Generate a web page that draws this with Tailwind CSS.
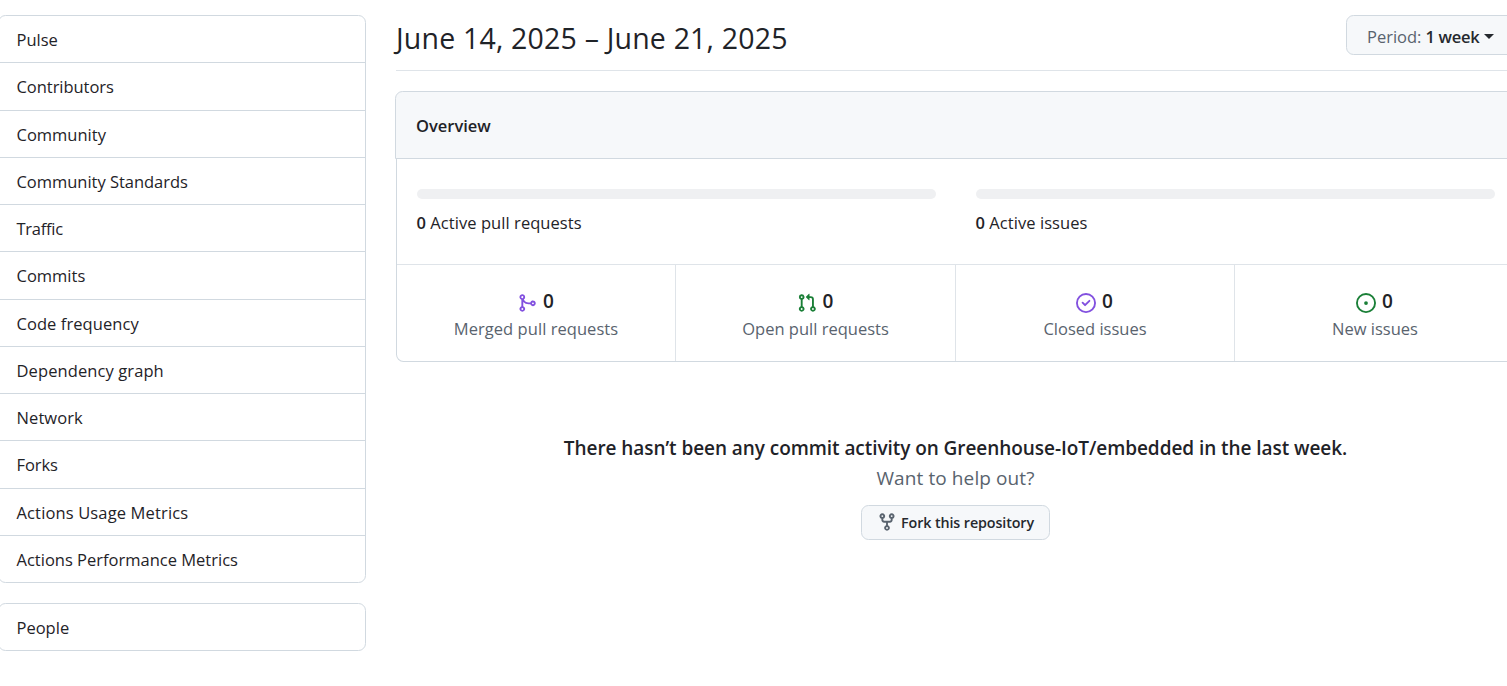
<!DOCTYPE html>
<html lang="en">
<head>
<meta charset="utf-8">
<title>Pulse</title>
<script src="https://cdn.jsdelivr.net/npm/@tailwindcss/browser@4"></script>
</head>
<body class="w-[1507px] h-[686px] overflow-hidden bg-white text-[#1f2328] font-['Open_Sans','Noto_Sans',sans-serif] text-[16.5px] leading-[26px]">
<div class="flex w-[1516px] pt-[15px]">
  <aside class="w-[368px] -ml-[2px] shrink-0">
    <nav class="rounded-[7.5px] border border-[#d1d9e0] [&>*+*]:border-t [&>*+*]:border-[#d1d9e0]">
      <a class="flex h-[46.25px] items-center pt-[2px] pl-[17.5px]">Pulse</a>
      <a class="flex h-[47.25px] items-center pt-[2px] pl-[17.5px] tracking-[-0.04px]">Contributors</a>
      <a class="flex h-[47.25px] items-center pt-[2px] pl-[17.5px]">Community</a>
      <a class="flex h-[47.25px] items-center pt-[2px] pl-[17.5px] tracking-[-0.03px]">Community Standards</a>
      <a class="flex h-[47.25px] items-center pt-[2px] pl-[17.5px] tracking-[-0.25px]">Traffic</a>
      <a class="flex h-[47.25px] items-center pt-[2px] pl-[17.5px]">Commits</a>
      <a class="flex h-[47.25px] items-center pt-[2px] pl-[17.5px] tracking-[0.07px]">Code frequency</a>
      <a class="flex h-[47.25px] items-center pt-[2px] pl-[17.5px] tracking-[0.1px]">Dependency graph</a>
      <a class="flex h-[47.25px] items-center pt-[2px] pl-[17.5px] tracking-[0.1px]">Network</a>
      <a class="flex h-[47.25px] items-center pt-[2px] pl-[17.5px] tracking-[-0.1px]">Forks</a>
      <a class="flex h-[47.25px] items-center pt-[2px] pl-[17.5px] tracking-[0.14px]">Actions Usage Metrics</a>
      <a class="flex h-[47.25px] items-center pt-[2px] pl-[17.5px]">Actions Performance Metrics</a>
    </nav>
    <nav class="mt-5 rounded-[7.5px] border border-[#d1d9e0]">
      <a class="flex h-[46px] items-center pt-[2px] pl-[17.5px]">People</a>
    </nav>
  </aside>
  <main class="ml-[29px] w-[1121px] shrink-0">
    <header class="ml-px flex h-14 items-start justify-between border-b border-[#d1d9e0]/70">
      <h2 class="text-[28.5px] leading-[47px] tracking-[0.19px] whitespace-nowrap">June 14, 2025 – June 21, 2025</h2>
      <button class="flex h-10 w-[170px] items-center rounded-[7.5px] border border-[#d1d9e0] bg-[#f6f8fa] pt-[3px] pl-5 whitespace-nowrap">
        <span class="font-medium text-[#59636e]">Period:</span>
        <span class="ml-[4px] font-semibold text-[#25292e] tracking-[-0.3px]">1 week</span>
        <span class="ml-[5px] border-x-5 border-t-5 border-x-transparent border-t-[#25292e]"></span>
      </button>
    </header>
    <section class="mt-5">
      <div class="flex h-[68px] items-center rounded-t-[7.5px] border border-[#d1d9e0] bg-[#f6f8fa] pt-[2px] pl-5">
        <h3 class="font-semibold">Overview</h3>
      </div>
      <div class="ml-px rounded-b-[7.5px] border border-t-0 border-[#d1d9e0]">
        <div class="grid h-[105px] grid-cols-2">
          <div class="px-5 pt-[30px]">
            <div class="h-[10px] rounded-full bg-[#eff0f2]"></div>
            <p class="mt-[11px] -ml-[0.5px] tracking-[0.06px]"><span class="font-semibold">0</span> Active pull requests</p>
          </div>
          <div class="px-5 pt-[30px]">
            <div class="h-[10px] rounded-full bg-[#eff0f2]"></div>
            <p class="mt-[11px] -ml-[0.5px] tracking-[0.06px]"><span class="font-semibold">0</span> Active issues</p>
          </div>
        </div>
        <ul class="grid h-[97px] grid-cols-[279px_280px_279px_280px] divide-x divide-[#d1d9e0]/70 border-t border-[#d1d9e0]/70 text-center">
          <li class="flex flex-col items-center pt-[22px]">
            <div class="-ml-px flex items-center gap-[6px] text-[19px] font-semibold leading-[28px]">
              <svg class="size-5 mt-[3px] fill-[#8250df]" viewBox="0 0 16 16"><path d="M5.45 5.154A4.25 4.25 0 0 0 9.25 7.5h1.378a2.251 2.251 0 1 1 0 1.5H9.25A5.734 5.734 0 0 1 5 7.123v3.505a2.25 2.25 0 1 1-1.5 0V5.372a2.25 2.25 0 1 1 1.95-.218ZM4.25 13.5a.75.75 0 1 0 0-1.5.75.75 0 0 0 0 1.5Zm8.5-4.5a.75.75 0 1 0 0-1.5.75.75 0 0 0 0 1.5ZM5 3.25a.75.75 0 1 0 0 .005V3.25Z"/></svg>
              <span>0</span></div>
            <p class="mt-px text-[#59636e] tracking-[0.05px]">Merged pull requests</p>
          </li>
          <li class="flex flex-col items-center pt-[22px]">
            <div class="-ml-px flex items-center gap-[6px] text-[19px] font-semibold leading-[28px]">
              <svg class="size-5 mt-[3px] fill-[#1a7f37]" viewBox="0 0 16 16"><path d="M1.5 3.25a2.25 2.25 0 1 1 3 2.122v5.256a2.251 2.251 0 1 1-1.5 0V5.372A2.25 2.25 0 0 1 1.5 3.25Zm5.677-.177L9.573.677A.25.25 0 0 1 10 .854V2.5h1A2.5 2.5 0 0 1 13.5 5v5.628a2.251 2.251 0 1 1-1.5 0V5a1 1 0 0 0-1-1h-1v1.646a.25.25 0 0 1-.427.177L7.177 3.427a.25.25 0 0 1 0-.354ZM3.75 2.5a.75.75 0 1 0 0 1.5.75.75 0 0 0 0-1.5Zm0 9.5a.75.75 0 1 0 0 1.5.75.75 0 0 0 0-1.5Zm8.25.75a.75.75 0 1 0 1.5 0 .75.75 0 0 0-1.5 0Z"/></svg>
              <span>0</span></div>
            <p class="mt-px text-[#59636e]">Open pull requests</p>
          </li>
          <li class="flex flex-col items-center pt-[22px]">
            <div class="-ml-px flex items-center gap-[6px] text-[19px] font-semibold leading-[28px]">
              <svg class="size-5 mt-[3px] fill-[#8250df]" viewBox="0 0 16 16"><path d="M11.28 6.78a.75.75 0 0 0-1.06-1.06L7.25 8.69 5.78 7.22a.75.75 0 0 0-1.06 1.06l2 2a.75.75 0 0 0 1.06 0l3.5-3.5Z"/><path d="M16 8A8 8 0 1 1 0 8a8 8 0 0 1 16 0Zm-1.5 0a6.5 6.5 0 1 0-13 0 6.5 6.5 0 0 0 13 0Z"/></svg>
              <span>0</span></div>
            <p class="mt-px text-[#59636e]">Closed issues</p>
          </li>
          <li class="flex flex-col items-center pt-[22px]">
            <div class="-ml-px flex items-center gap-[6px] text-[19px] font-semibold leading-[28px]">
              <svg class="size-5 mt-[3px] fill-[#1a7f37]" viewBox="0 0 16 16"><path d="M8 9.5a1.5 1.5 0 1 0 0-3 1.5 1.5 0 0 0 0 3Z"/><path d="M8 0a8 8 0 1 1 0 16A8 8 0 0 1 8 0ZM1.5 8a6.5 6.5 0 1 0 13 0 6.5 6.5 0 0 0-13 0Z"/></svg>
              <span>0</span></div>
            <p class="mt-px text-[#59636e]">New issues</p>
          </li>
        </ul>
      </div>
    </section>
    <section class="mt-[71px] flex flex-col items-center text-[19px] leading-[30px] whitespace-nowrap">
      <h3 class="font-semibold tracking-[-0.06px]">There hasn’t been any commit activity on Greenhouse-IoT/embedded in the last week.</h3>
      <p class="text-[#59636e] tracking-[0.1px]">Want to help out?</p>
      <button class="mt-3 flex h-[35px] w-[189px] items-center rounded-[7.5px] border border-[#d1d9e0] bg-[#f6f8fa] pl-[15px] text-[14.3px] font-semibold text-[#25292e]">
        <svg class="size-5 -mt-px fill-[#59636e]" viewBox="0 0 16 16"><path d="M5 5.372v.878c0 .414.336.75.75.75h4.5a.75.75 0 0 0 .75-.75v-.878a2.25 2.25 0 1 1 1.5 0v.878a2.25 2.25 0 0 1-2.25 2.25h-1.5v2.128a2.251 2.251 0 1 1-1.5 0V8.5h-1.5A2.25 2.25 0 0 1 3.5 6.25v-.878a2.25 2.25 0 1 1 1.5 0ZM5 3.25a.75.75 0 1 0-1.5 0 .75.75 0 0 0 1.5 0Zm6.75.75a.75.75 0 1 0 0-1.5.75.75 0 0 0 0 1.5Zm-3 8.75a.75.75 0 1 0-1.5 0 .75.75 0 0 0 1.5 0Z"/></svg>
        <span class="ml-[4px] tracking-[-0.1px]">Fork this repository</span>
      </button>
    </section>
  </main>
</div>
</body>
</html>
